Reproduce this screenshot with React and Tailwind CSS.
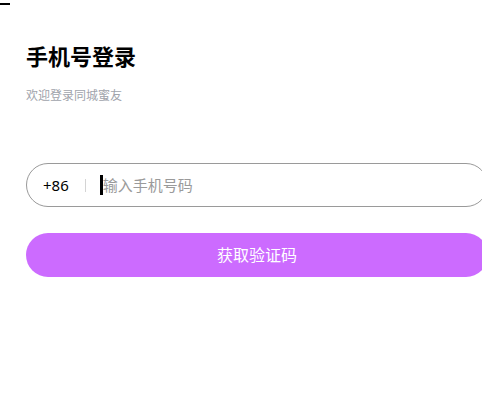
export default function App() {
  return (
    <div className="relative w-[482px] h-[407px] overflow-hidden bg-white font-['Noto_Sans','Noto_Sans_CJK_SC',sans-serif]">
      <div className="absolute left-0 top-[3px] w-[10px] h-[2px] bg-black" />
      <div className="pl-[26px] pt-[40px]">
        <h1 className="text-[22px] leading-[32px] font-bold text-black">手机号登录</h1>
        <p className="mt-[16px] text-[12px] leading-[16px] text-[#a0a3ab]">欢迎登录同城蜜友</p>

        <div className="mt-[59px] w-[462px] h-[44px] rounded-full border border-[#9a9a9a] flex items-center pl-[16px]">
          <span className="text-[15px] text-black">+86</span>
          <span className="ml-[16px] w-px h-[13px] bg-[#d4d4d4]" />
          <span className="ml-[14px] w-[3px] h-[20px] bg-black" />
          <span className="text-[15px] text-[#9a9a9a]">输入手机号码</span>
        </div>

        <button className="mt-[26px] w-[462px] h-[44px] rounded-full bg-[#cc6bff] text-white text-[16px] flex items-center justify-center">
          获取验证码
        </button>
      </div>
    </div>
  );
}
